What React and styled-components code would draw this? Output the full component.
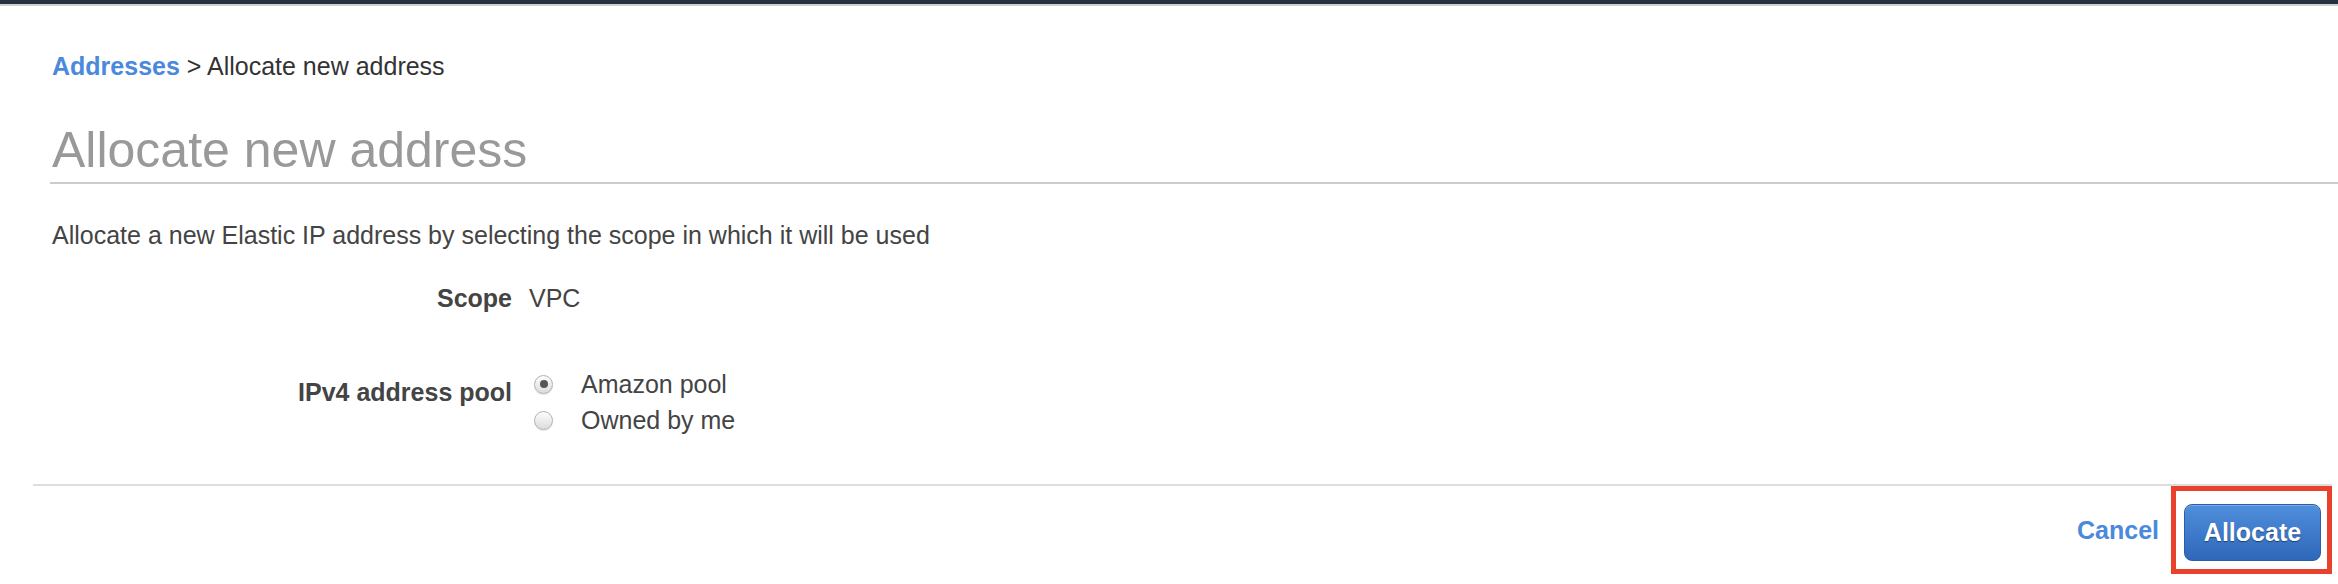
import React, { useState } from 'react'
import styled, { createGlobalStyle } from 'styled-components'

const GlobalStyle = createGlobalStyle`
  body {
    margin: 0;
    background: #fff;
    font-family: "Liberation Sans", Arial, Helvetica, sans-serif;
    color: #333;
  }
`

const pools = [
  { id: 'amazon', label: 'Amazon pool' },
  { id: 'owned', label: 'Owned by me' },
]

export default function App() {
  const [pool, setPool] = useState('amazon')

  return (
    <>
      <GlobalStyle />
      <TopBar />
      <Page>
        <Breadcrumb>
          <CrumbLink>Addresses</CrumbLink> &gt; Allocate new address
        </Breadcrumb>
        <Header>
          <Title>Allocate new address</Title>
        </Header>
        <Description>
          Allocate a new Elastic IP address by selecting the scope in which it will be used
        </Description>
        <Form>
          <Label>Scope</Label>
          <Value>VPC</Value>
          <Label top={12}>IPv4 address pool</Label>
          <Options>
            {pools.map(p => (
              <Option key={p.id} onClick={() => setPool(p.id)}>
                <Radio checked={pool === p.id} />
                {p.label}
              </Option>
            ))}
          </Options>
        </Form>
      </Page>
      <Footer>
        <Cancel>Cancel</Cancel>
        <Highlight>
          <PrimaryButton>Allocate</PrimaryButton>
        </Highlight>
      </Footer>
    </>
  )
}

const TopBar = styled.div`
  height: 4px;
  background: #27303e;
  border-bottom: 2px solid #cfcfcf;
`

const Page = styled.div`
  padding: 0 0 0 52px;
`

const Breadcrumb = styled.div`
  margin-top: 45px;
  font-size: 25px;
  line-height: 30px;
  color: #333;
`

const CrumbLink = styled.a`
  color: #4a89dc;
  font-weight: bold;
  cursor: pointer;
`

const Header = styled.div`
  margin: 39px 0 0 -2px;
  padding: 0 0 2px 2px;
  border-bottom: 2px solid #cccccc;
`

const Title = styled.h1`
  margin: 0;
  font-size: 50px;
  line-height: 60px;
  font-weight: normal;
  color: #999;
`

const Description = styled.p`
  margin: 36px 0 0;
  font-size: 25px;
  line-height: 30px;
  color: #444;
`

const Form = styled.div`
  display: grid;
  grid-template-columns: 460px auto;
  column-gap: 17px;
  row-gap: 52px;
  margin-top: 33px;
  align-items: start;
`

const Label = styled.div`
  text-align: right;
  font-size: 25px;
  line-height: 30px;
  font-weight: bold;
  color: #444;
  padding-top: ${p => p.top || 0}px;
`

const Value = styled.div`
  font-size: 25px;
  line-height: 30px;
  color: #444;
`

const Options = styled.div`
  display: flex;
  flex-direction: column;
  margin-top: 1px;
`

const Option = styled.label`
  display: flex;
  align-items: center;
  font-size: 25px;
  line-height: 36px;
  color: #444;
  cursor: pointer;
`

const Radio = styled.span`
  position: relative;
  box-sizing: border-box;
  width: 19px;
  height: 19px;
  margin: 0 28px 0 5px;
  border-radius: 50%;
  border: 1px solid #b3b3b3;
  background: linear-gradient(#fdfdfd, #dcdcdc);
  box-shadow: 0 1px 1px rgba(0, 0, 0, 0.12);

  &::after {
    content: '';
    display: ${p => (p.checked ? 'block' : 'none')};
    position: absolute;
    left: 50%;
    top: 50%;
    width: 8px;
    height: 8px;
    margin: -4px 0 0 -4px;
    border-radius: 50%;
    background: #555;
  }
`

const Footer = styled.div`
  display: flex;
  justify-content: flex-end;
  align-items: center;
  gap: 12px;
  margin: 46px 6px 0 33px;
  border-top: 2px solid #dddddd;
`

const Cancel = styled.a`
  font-size: 25px;
  line-height: 30px;
  font-weight: bold;
  color: #4a89dc;
  cursor: pointer;
`

const Highlight = styled.div`
  padding: 13px 6px 8px 8px;
  border: 5px solid #e8412c;
`

const PrimaryButton = styled.button`
  display: block;
  width: 137px;
  height: 57px;
  padding: 0;
  border: 1px solid #2c5ea8;
  border-radius: 8px;
  background: linear-gradient(#4f8fdc, #2f67b9);
  box-shadow: inset 0 1px 0 rgba(255, 255, 255, 0.25);
  color: #fff;
  font-family: "Liberation Sans", Arial, sans-serif;
  font-size: 25px;
  font-weight: bold;
  text-shadow: 0 1px 1px rgba(0, 0, 0, 0.45);
  cursor: pointer;
`
